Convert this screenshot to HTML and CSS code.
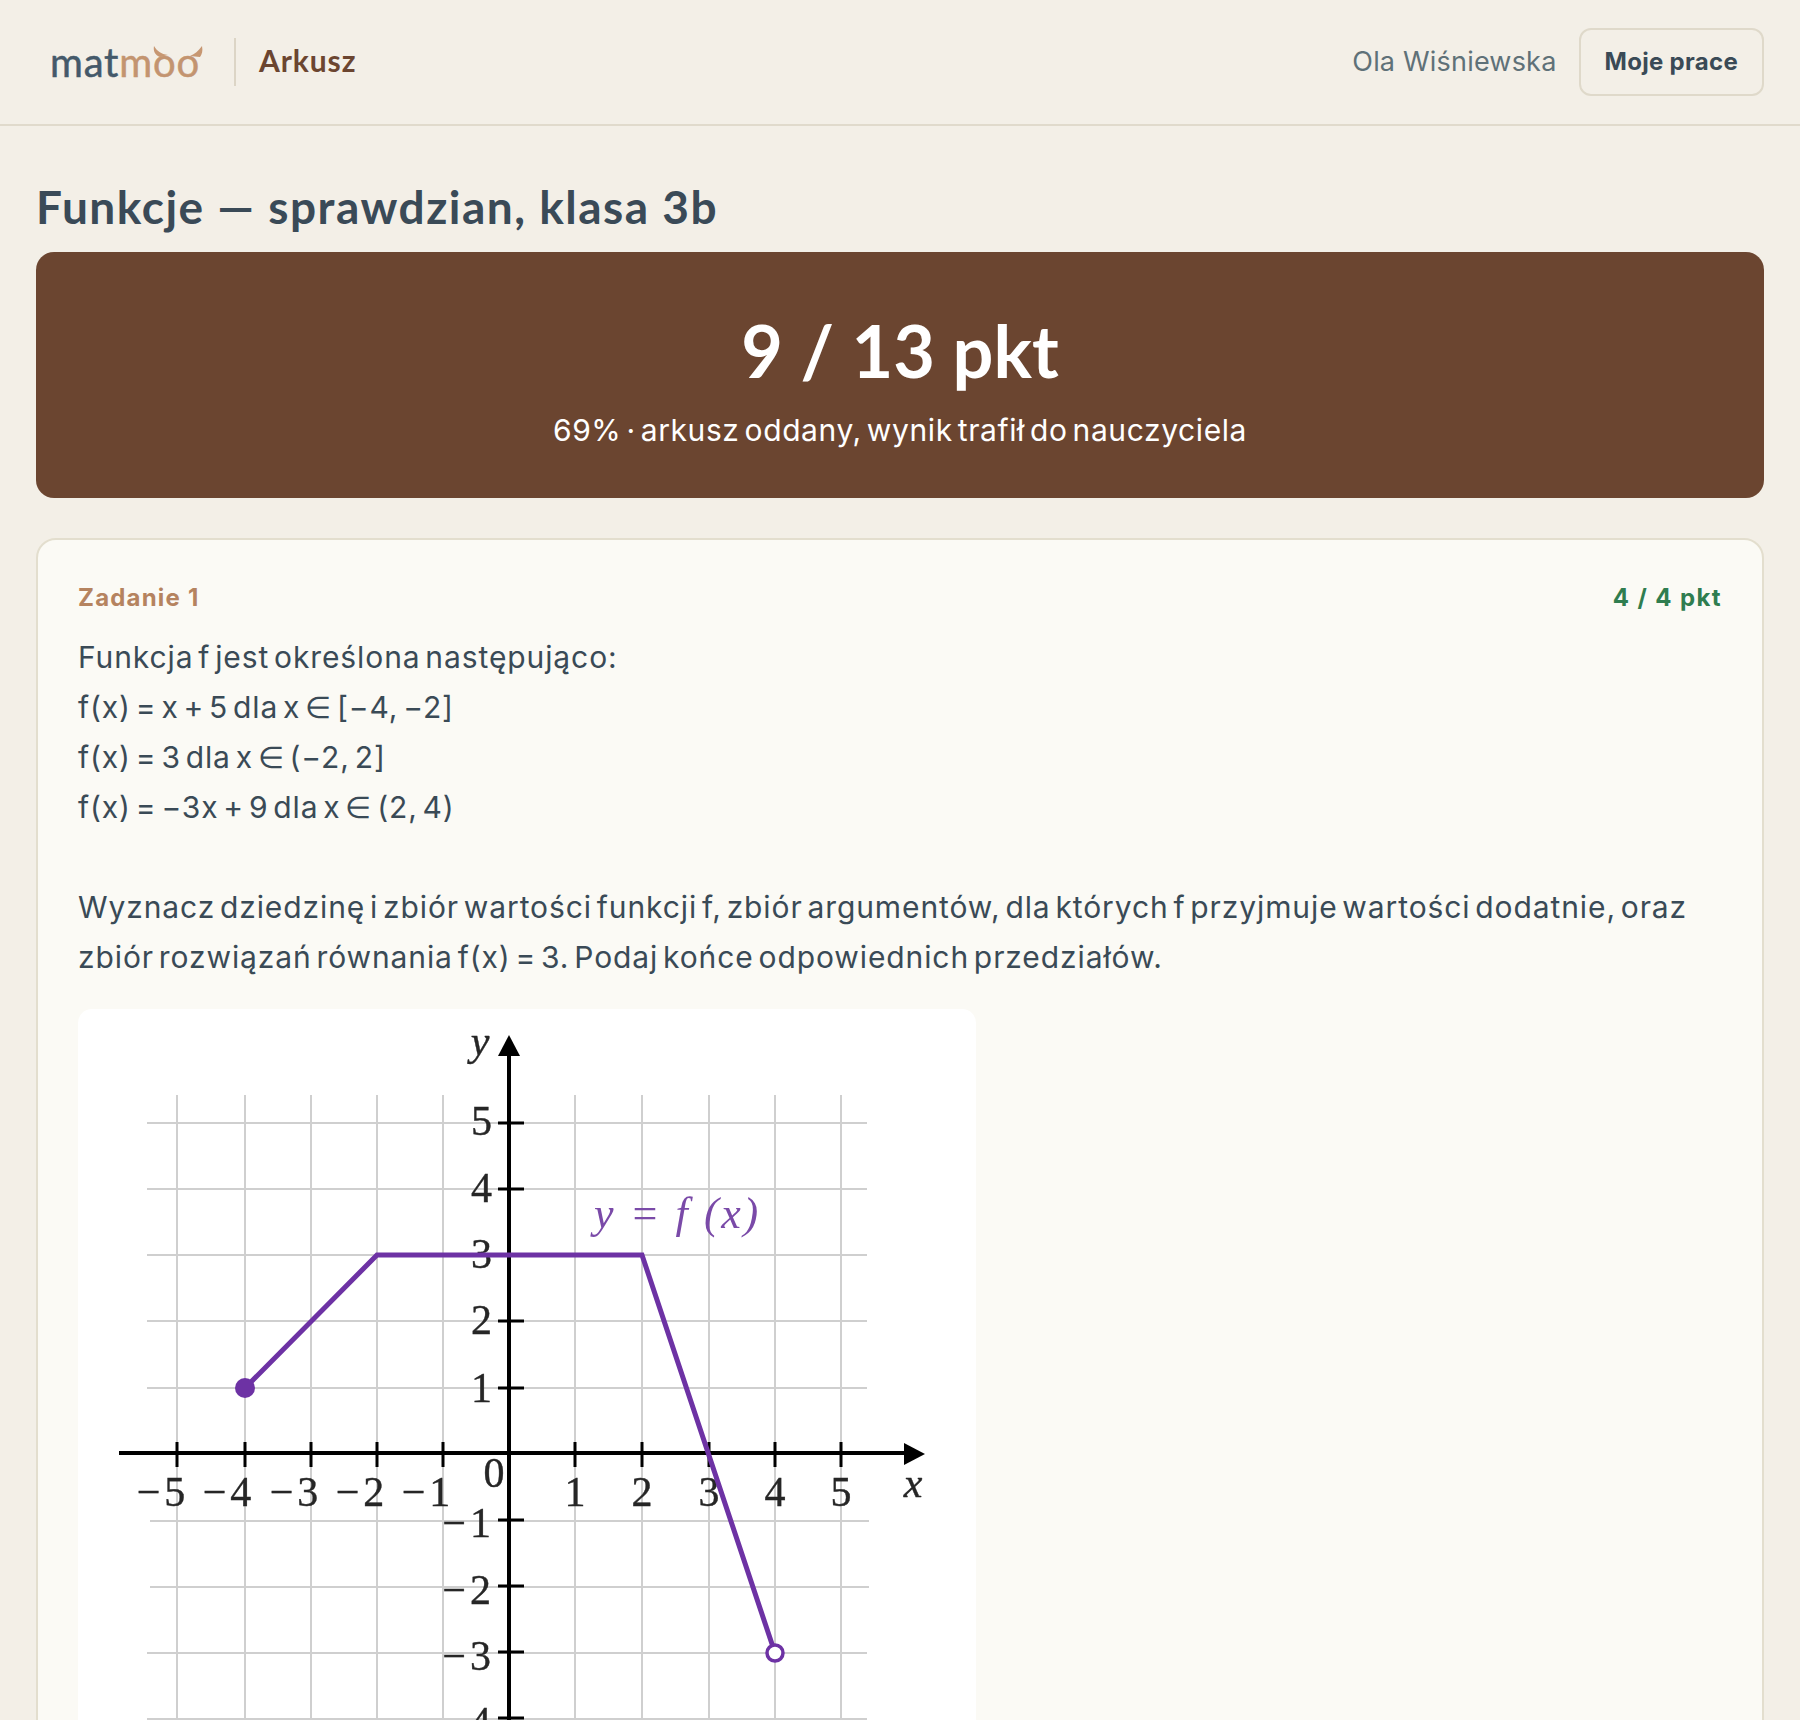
FILE: index.html
```html
<!DOCTYPE html>
<html lang="pl">
<head>
    <meta charset="UTF-8">
    <meta name="viewport" content="width=device-width, initial-scale=1.0">
    <title>Arkusz - matmoo</title>
    <link rel="stylesheet" href="styles.css">
</head>
<body>
    <header class="topbar">
        <div class="brand">
            <div class="logo">
                <span class="logo-dark">mat</span><span class="logo-light">moo</span>
                <svg class="logo-horns" viewBox="0 0 52 12" width="52" height="12" aria-hidden="true">
                    <path d="M1 0 C0 5 2 9 7 11 L15 9 C8 8 4 5 1 0 Z" />
                    <path d="M49 0 C45 5 42 8 37 10 L47 11 C49 8 50 5 49 0 Z" />
                </svg>
            </div>
            <span class="brand-sep"></span>
            <span class="brand-title">Arkusz</span>
        </div>
        <div class="userbox">
            <span class="username">Ola Wiśniewska</span>
            <a class="btn" href="#">Moje prace</a>
        </div>
    </header>

    <main class="content">
        <h1 class="page-title">Funkcje — sprawdzian, klasa 3b</h1>

        <section class="result">
            <div class="result-score">9 / 13 pkt</div>
            <div class="result-note">69% · arkusz oddany, wynik trafił do nauczyciela</div>
        </section>

        <article class="task">
            <div class="task-head">
                <span class="task-no">Zadanie 1</span>
                <span class="task-points">4 / 4 pkt</span>
            </div>
            <p class="task-text">Funkcja f jest określona następująco:
f(x) = x + 5 dla x ∈ [−4, −2]
f(x) = 3 dla x ∈ (−2, 2]
f(x) = −3x + 9 dla x ∈ (2, 4)

Wyznacz dziedzinę i zbiór wartości funkcji f, zbiór argumentów, dla których f przyjmuje wartości dodatnie, oraz zbiór rozwiązań równania f(x) = 3. Podaj końce odpowiednich przedziałów.</p>

            <figure class="graph">
                <svg viewBox="0 0 898 780" width="898" height="780">
                    <g class="grid">
                        <path d="M99 86V780M167 86V780M233 86V780M299 86V780M365 86V780" />
                        <path d="M497 86V780M564 86V780M631 86V780M697 86V780M763 86V780" />
                        <path d="M69 114H789M69 180H789M69 246H789M69 312H789M69 379H789" />
                        <path d="M72 512H791M72 578H791M69 644H789M69 710H789" />
                    </g>
                    <g class="num">
                        <text x="414" y="126" text-anchor="end">5</text>
                        <text x="414" y="193" text-anchor="end">4</text>
                        <text x="414" y="259" text-anchor="end">3</text>
                        <text x="414" y="325" text-anchor="end">2</text>
                        <text x="414" y="393" text-anchor="end">1</text>
                        <text x="417" y="528" text-anchor="end" class="neg">−1</text>
                        <text x="417" y="595" text-anchor="end" class="neg">−2</text>
                        <text x="417" y="661" text-anchor="end" class="neg">−3</text>
                        <text x="417" y="727" text-anchor="end" class="neg">−4</text>
                        <text x="85" y="497" text-anchor="middle" class="neg">−5</text>
                        <text x="151" y="497" text-anchor="middle" class="neg">−4</text>
                        <text x="218" y="497" text-anchor="middle" class="neg">−3</text>
                        <text x="284" y="497" text-anchor="middle" class="neg">−2</text>
                        <text x="350" y="497" text-anchor="middle" class="neg">−1</text>
                        <text x="416" y="478" text-anchor="middle" class="zero">0</text>
                        <text x="497" y="497" text-anchor="middle">1</text>
                        <text x="564" y="497" text-anchor="middle">2</text>
                        <text x="631" y="497" text-anchor="middle">3</text>
                        <text x="697" y="497" text-anchor="middle">4</text>
                        <text x="763" y="497" text-anchor="middle">5</text>
                        <text x="835" y="488" text-anchor="middle" class="var">x</text>
                        <text x="402" y="46" text-anchor="middle" class="var">y</text>
                    </g>
                    <text class="fn" x="516" y="219">y = f (x)</text>
                    <g class="axes">
                        <path d="M431 44V780M41 444H830" />
                        <path class="ticks" d="M99 433V458M167 433V458M233 433V458M299 433V458M365 433V458M497 433V458M564 433V458M631 433V458M697 433V458M763 433V458" />
                        <path class="ticks" d="M420 114H446M420 180H446M420 246H446M420 312H446M420 379H446M420 511H446M420 577H446M420 643H446M420 709H446" />
                        <path class="arrow" d="M431 26L442 47H420Z" />
                        <path class="arrow" d="M847 445L826 434V456Z" />
                    </g>
                    <polyline class="plot" points="167,379 299,246 564,246 697,644" />
                    <circle class="dot" cx="167" cy="379" r="10" />
                    <circle class="hole" cx="697" cy="644" r="8" />
                </svg>
            </figure>
        </article>
    </main>
</body>
</html>
```

FILE: styles.css
```css
* {
    box-sizing: border-box;
}
html, body {
    height: 100%;
    overflow: hidden;
}
body {
    margin: 0;
    background-color: #f3efe7;
    color: #3a4a56;
    font-family: Inter, "Liberation Sans", sans-serif;
}

/* top bar */
.topbar {
    display: flex;
    justify-content: space-between;
    align-items: center;
    height: 126px;
    padding: 0 36px 0 50px;
    border-bottom: 2px solid #e0dacc;
}
.brand {
    display: flex;
    align-items: center;
}
.logo {
    position: relative;
    width: 152px;
    font-family: Lato, sans-serif;
    font-size: 40px;
    letter-spacing: 0.8px;
    line-height: 48px;
    white-space: nowrap;
    -webkit-text-stroke: 0.5px;
}
.logo-dark {
    color: #44596a;
}
.logo-light {
    color: #c39470;
}
.logo-horns {
    position: absolute;
    left: 103px;
    top: 8px;
    fill: #c79772;
}
.brand-sep {
    width: 2px;
    height: 48px;
    margin: 0 23px 0 32px;
    background-color: #dcd5c6;
}
.brand-title {
    margin-top: -4px;
    font-family: Lato, sans-serif;
    font-size: 30px;
    font-weight: 700;
    letter-spacing: 0.9px;
    color: #6b4530;
}
.userbox {
    display: flex;
    align-items: center;
    gap: 22px;
}
.username {
    margin-top: -2px;
    font-size: 27px;
    letter-spacing: 0.2px;
    color: #5f7178;
}
.btn {
    display: block;
    height: 68px;
    padding: 0 24px;
    border: 2px solid #dfd9ca;
    border-radius: 12px;
    font-size: 24px;
    font-weight: 700;
    letter-spacing: 0.3px;
    line-height: 64px;
    color: #3a4a56;
    text-decoration: none;
}

/* main */
.content {
    padding: 0 36px;
}
.page-title {
    margin: 0;
    padding-top: 53px;
    height: 126px;
    font-family: Lato, sans-serif;
    font-size: 46px;
    font-weight: 700;
    letter-spacing: 1.5px;
    line-height: 56px;
    color: #3a4a57;
}
.result {
    height: 246px;
    padding-top: 56px;
    margin-bottom: 40px;
    border-radius: 18px;
    background-color: #6b4530;
    color: #fff;
    text-align: center;
}
.result-score {
    font-family: Lato, sans-serif;
    font-size: 72px;
    font-weight: 700;
    line-height: 84px;
}
.result-note {
    margin-top: 18px;
    font-size: 30px;
    letter-spacing: 0.6px;
    word-spacing: -4px;
    line-height: 40px;
}

.task {
    padding: 40px 40px 0;
    border: 2px solid #e3dece;
    border-radius: 20px;
    background-color: #fbfaf5;
}
.task-head {
    display: flex;
    justify-content: space-between;
    font-size: 24px;
    font-weight: 700;
    line-height: 36px;
}
.task-no {
    letter-spacing: 1.2px;
    color: #b5835f;
}
.task-points {
    letter-spacing: 1.4px;
    color: #2f7d4f;
}
.task-text {
    margin: 16px 0 27px;
    font-size: 30px;
    letter-spacing: 0.9px;
    word-spacing: -4.5px;
    line-height: 50px;
    white-space: pre-line;
}
.graph {
    width: 898px;
    height: 780px;
    margin: 0;
    border-radius: 14px;
    background-color: #fff;
    overflow: hidden;
}
.graph svg {
    display: block;
    filter: blur(0.5px);
}

/* graph */
.grid path {
    fill: none;
    stroke: #cfcfcf;
    stroke-width: 2;
}
.num text {
    font-family: "Liberation Serif", serif;
    font-size: 42px;
    fill: #262626;
    stroke: #262626;
    stroke-width: 0.4;
}
.num .neg {
    letter-spacing: 4px;
}
.num .var {
    font-style: italic;
}
.fn {
    font-family: "Liberation Serif", serif;
    font-size: 44px;
    font-style: italic;
    letter-spacing: 2.6px;
    fill: #7a4aa8;
}
.axes path {
    fill: none;
    stroke: #000;
    stroke-width: 4;
}
.axes .ticks {
    stroke-width: 3;
}
.axes .arrow {
    fill: #000;
    stroke: none;
}
.plot {
    fill: none;
    stroke: #6d32a4;
    stroke-width: 5;
}
.dot {
    fill: #6d32a4;
}
.hole {
    fill: #fff;
    stroke: #6d32a4;
    stroke-width: 3.5;
}
```
